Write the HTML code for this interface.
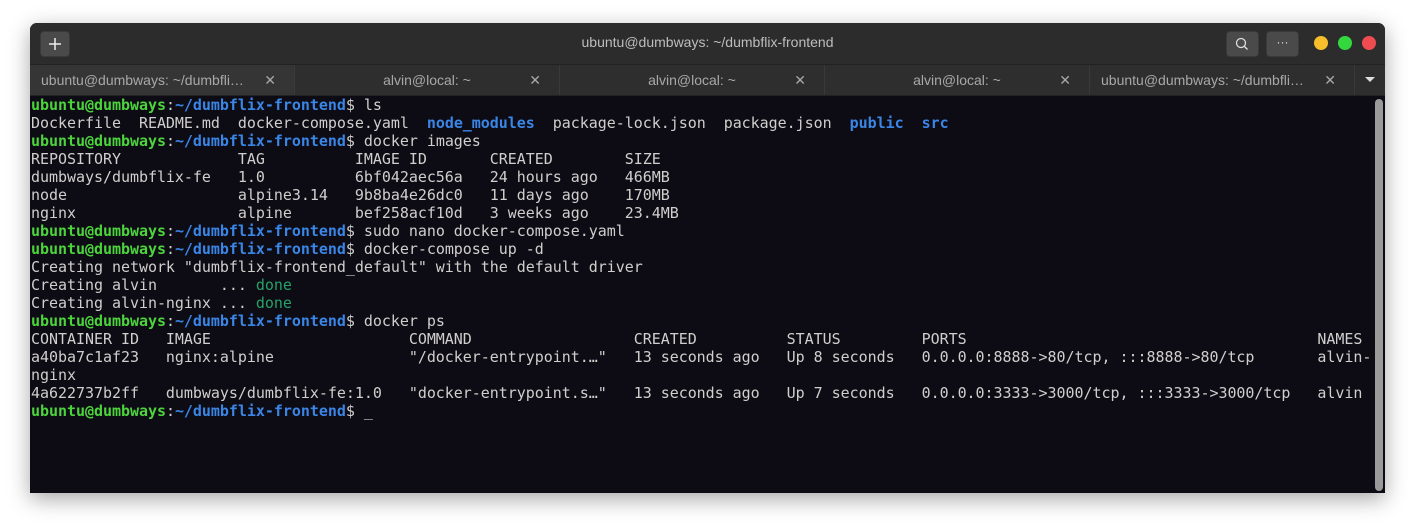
<!DOCTYPE html>
<html><head><style>
body{margin:0;width:1417px;height:532px;background:#fff;position:relative;overflow:hidden;font-family:"Liberation Sans",sans-serif}
.win{position:absolute;left:30px;top:23px;width:1355px;height:470px;background:#0d0b14;border-radius:7px 7px 0 0;box-shadow:0 6px 22px rgba(0,0,0,.35);overflow:hidden}
.title{position:absolute;left:0;top:0;width:100%;height:41px;background:#2c2c2c;border-bottom:1px solid #222}
.title .t{position:absolute;left:0;right:0;top:11px;text-align:center;color:#bdbdbd;font-size:14px}
.btn{position:absolute;top:8px;height:24px;background:#4a4a4a;border-radius:4px;border:1px solid #3a3a3a}
.dot{position:absolute;top:13px;width:14px;height:14px;border-radius:50%}
.tabs{position:absolute;left:0;top:42px;width:100%;height:30px;background:#2e2e2e;border-bottom:1px solid #222}
.tab{position:absolute;top:0;height:30px;width:264px;border-right:1px solid #3a3a3a;color:#a8a8a8;font-size:14px;line-height:30px;text-align:center}
.tab .x{position:absolute;right:18px;top:0;color:#a8a8a8}
.term{position:absolute;left:1px;top:73px;font-family:"DejaVu Sans Mono",monospace;font-size:15px;letter-spacing:-0.035px;line-height:18px;color:#d0cfcc;white-space:pre}
.g{color:#4cd43c;font-weight:bold}.b{color:#3a86e6;font-weight:bold}.d{color:#26a269}
.sb{position:absolute;right:2px;top:76px;width:8px;height:392px;background:#9a9a9a;border-radius:4px}
</style></head><body>
<div class="win">
<div class="title">
<div class="btn" style="left:10px;width:28px;"><svg width="28" height="24"><path d="M14 6v12M8 12h12" stroke="#eee" stroke-width="1.5"/></svg></div>
<div class="t">ubuntu@dumbways: ~/dumbflix-frontend</div>
<div class="btn" style="left:1196px;width:31px;"><svg width="31" height="24"><circle cx="14" cy="11" r="4.5" stroke="#ddd" stroke-width="1.3" fill="none"/><path d="M17.5 14.5l3 3" stroke="#ddd" stroke-width="1.3"/></svg></div>
<div class="btn" style="left:1236px;width:31px;color:#ddd;font-size:12px;text-align:center;line-height:20px">···</div>
<div class="dot" style="left:1284px;background:#f6be2b"></div>
<div class="dot" style="left:1308px;background:#33d83f"></div>
<div class="dot" style="left:1332px;background:#ee4c50"></div>
</div>
<div class="tabs">
<div class="tab" style="left:0;background:#353535;text-align:left;padding-left:11px;width:253px">ubuntu@dumbways: ~/dumbfli… <span class="x">✕</span></div>
<div class="tab" style="left:265px">alvin@local: ~<span class="x">✕</span></div>
<div class="tab" style="left:530px">alvin@local: ~<span class="x">✕</span></div>
<div class="tab" style="left:795px">alvin@local: ~<span class="x">✕</span></div>
<div class="tab" style="left:1060px;text-align:left;padding-left:11px;width:253px">ubuntu@dumbways: ~/dumbfli… <span class="x">✕</span></div>
<svg style="position:absolute;left:1334px;top:11px" width="12" height="8"><path d="M1 1h10L6 6z" fill="#ddd"/></svg>
</div>
<div class="term"><span class="g">ubuntu@dumbways</span>:<span class="b">~/dumbflix-frontend</span>$ ls
Dockerfile  README.md  docker-compose.yaml  <span class="b">node_modules</span>  package-lock.json  package.json  <span class="b">public</span>  <span class="b">src</span>
<span class="g">ubuntu@dumbways</span>:<span class="b">~/dumbflix-frontend</span>$ docker images
REPOSITORY             TAG          IMAGE ID       CREATED        SIZE
dumbways/dumbflix-fe   1.0          6bf042aec56a   24 hours ago   466MB
node                   alpine3.14   9b8ba4e26dc0   11 days ago    170MB
nginx                  alpine       bef258acf10d   3 weeks ago    23.4MB
<span class="g">ubuntu@dumbways</span>:<span class="b">~/dumbflix-frontend</span>$ sudo nano docker-compose.yaml
<span class="g">ubuntu@dumbways</span>:<span class="b">~/dumbflix-frontend</span>$ docker-compose up -d
Creating network "dumbflix-frontend_default" with the default driver
Creating alvin       ... <span class="d">done</span>
Creating alvin-nginx ... <span class="d">done</span>
<span class="g">ubuntu@dumbways</span>:<span class="b">~/dumbflix-frontend</span>$ docker ps
CONTAINER ID   IMAGE                      COMMAND                  CREATED          STATUS         PORTS                                       NAMES
a40ba7c1af23   nginx:alpine               "/docker-entrypoint.…"   13 seconds ago   Up 8 seconds   0.0.0.0:8888->80/tcp, :::8888->80/tcp       alvin-
nginx
4a622737b2ff   dumbways/dumbflix-fe:1.0   "docker-entrypoint.s…"   13 seconds ago   Up 7 seconds   0.0.0.0:3333->3000/tcp, :::3333->3000/tcp   alvin
<span class="g">ubuntu@dumbways</span>:<span class="b">~/dumbflix-frontend</span>$ _</div>
<div class="sb"></div>
</div>
</body></html>
